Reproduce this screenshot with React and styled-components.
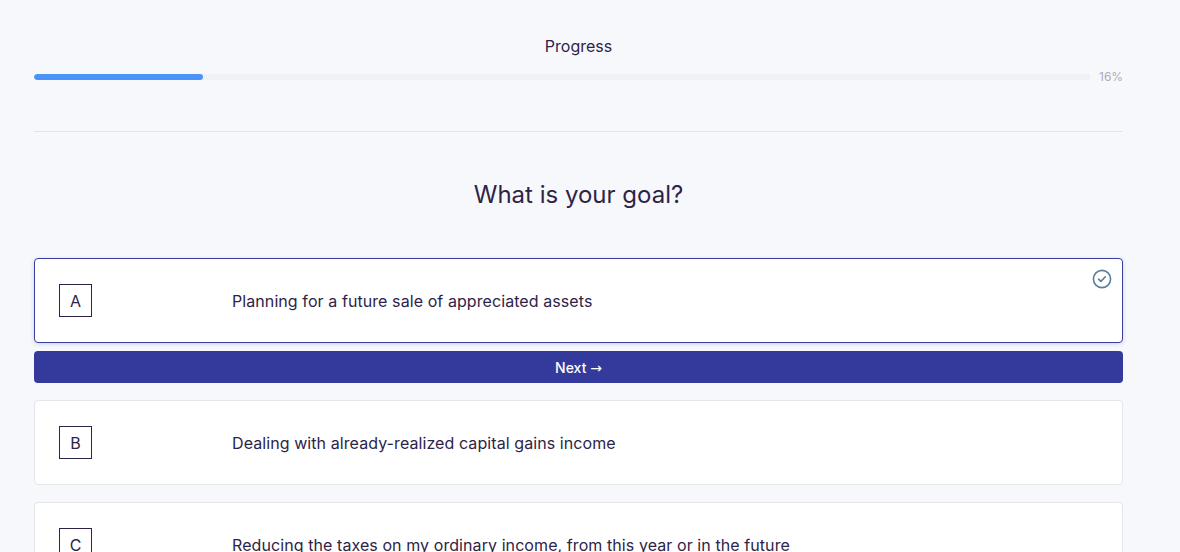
import React, { useState } from "react";
import styled, { createGlobalStyle } from "styled-components";

const GlobalStyle = createGlobalStyle`
  * { box-sizing: border-box; }
  body {
    margin: 0;
    background: #f7f8fc;
    font-family: Inter, "Noto Sans", sans-serif;
    color: #2d2448;
  }
`;

const options = [
  { key: "A", text: "Planning for a future sale of appreciated assets" },
  { key: "B", text: "Dealing with already-realized capital gains income" },
  { key: "C", text: "Reducing the taxes on my ordinary income, from this year or in the future" },
];

const App = () => {
  const [selected, setSelected] = useState("A");
  const progress = 16;

  return (
    <>
      <GlobalStyle />
      <Page>
        <ProgressSection>
          <ProgressLabel>Progress</ProgressLabel>
          <ProgressRow>
            <Track>
              <Fill style={{ width: `${progress}%` }} />
            </Track>
            <Percent>{progress}%</Percent>
          </ProgressRow>
        </ProgressSection>
        <Divider />
        <Question>What is your goal?</Question>
        <OptionList>
          {options.map((opt) => (
            <OptionGroup key={opt.key}>
              <OptionCard $active={selected === opt.key} onClick={() => setSelected(opt.key)}>
                <LetterBox>{opt.key}</LetterBox>
                <OptionText>{opt.text}</OptionText>
                {selected === opt.key && (
                  <CheckIcon viewBox="0 0 20 20" fill="none">
                    <circle cx="10" cy="10" r="8.6" stroke="#5b7d9b" strokeWidth="1.6" />
                    <path d="M6.6 10.2l2.3 2.2 4.4-4.6" stroke="#5b7d9b" strokeWidth="1.6" strokeLinecap="round" strokeLinejoin="round" />
                  </CheckIcon>
                )}
              </OptionCard>
              {selected === opt.key && (
                <NextButton>
                  Next <Arrow>→</Arrow>
                </NextButton>
              )}
            </OptionGroup>
          ))}
        </OptionList>
      </Page>
    </>
  );
};

const Page = styled.main`
  width: 1089px;
  margin-left: 34px;
  padding-top: 36px;
`;

const ProgressSection = styled.section`
  display: flex;
  flex-direction: column;
  align-items: center;
`;

const ProgressLabel = styled.div`
  font-size: 16px;
  line-height: 20px;
  color: #2d2448;
`;

const ProgressRow = styled.div`
  display: flex;
  align-items: center;
  width: 100%;
  gap: 9px;
  margin-top: 13px;
`;

const Track = styled.div`
  flex: 1;
  height: 6px;
  border-radius: 3px;
  background: #f0f1f5;
  overflow: hidden;
`;

const Fill = styled.div`
  height: 100%;
  border-radius: 3px;
  background: #4a93f8;
`;

const Percent = styled.span`
  font-size: 12px;
  color: #a7adbb;
  width: 24px;
`;

const Divider = styled.hr`
  border: none;
  border-top: 1px solid #e4e5ea;
  margin: 47px 0 0;
`;

const Question = styled.h1`
  margin: 47px 0 0;
  font-size: 24px;
  font-weight: 400;
  line-height: 32px;
  text-align: center;
  color: #2d2448;
`;

const OptionList = styled.div`
  display: flex;
  flex-direction: column;
  gap: 17px;
  margin-top: 47px;
`;

const OptionGroup = styled.div`
  display: flex;
  flex-direction: column;
  gap: 8px;
`;

const OptionCard = styled.div`
  position: relative;
  display: flex;
  align-items: center;
  height: 85px;
  padding-left: 24px;
  background: #fff;
  border: 1px solid ${({ $active }) => ($active ? "#3a3f9e" : "#e5e6ea")};
  border-radius: 4px;
  box-shadow: ${({ $active }) => ($active ? "0 1px 4px rgba(51, 58, 155, 0.2)" : "none")};
  cursor: pointer;
`;

const LetterBox = styled.div`
  display: flex;
  align-items: center;
  justify-content: center;
  width: 33px;
  height: 33px;
  border: 1px solid #2d2448;
  font-size: 16px;
  color: #2d2448;
`;

const OptionText = styled.div`
  margin-left: 140px;
  font-size: 16px;
  letter-spacing: 0.08px;
  color: #2d2448;
`;

const CheckIcon = styled.svg`
  position: absolute;
  top: 10px;
  right: 10px;
  width: 20px;
  height: 20px;
`;

const NextButton = styled.button`
  height: 32px;
  border: none;
  border-radius: 4px;
  background: #333a9b;
  color: #fff;
  font-family: Inter, "Noto Sans", sans-serif;
  font-size: 14px;
  font-weight: 500;
  cursor: pointer;
`;

const Arrow = styled.span`
  font-family: "DejaVu Sans", sans-serif;
  font-weight: 400;
`;

export default App;
